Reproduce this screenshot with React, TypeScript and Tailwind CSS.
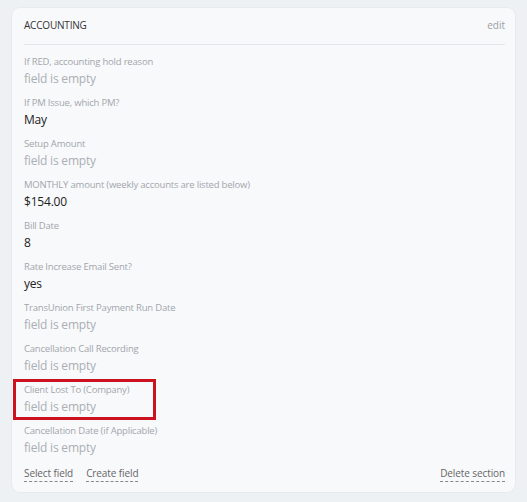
import React from "react";

const fields: { label: string; value: string | null }[] = [
  { label: "If RED, accounting hold reason", value: null },
  { label: "If PM Issue, which PM?", value: "May" },
  { label: "Setup Amount", value: null },
  { label: "MONTHLY amount (weekly accounts are listed below)", value: "$154.00" },
  { label: "Bill Date", value: "8" },
  { label: "Rate Increase Email Sent?", value: "yes" },
  { label: "TransUnion First Payment Run Date", value: null },
  { label: "Cancellation Call Recording", value: null },
  { label: "Client Lost To (Company)", value: null },
  { label: "Cancellation Date (if Applicable)", value: null },
];

export default function App() {
  return (
    <div
      className="w-[527px] h-[502px] bg-[#eef1f4] pt-[8px] pl-[12px]"
      style={{ fontFamily: '"Open Sans", "Noto Sans", sans-serif' }}
    >
      <div className="w-[503px] h-[484px] bg-[#f8f9fb] rounded-[8px] shadow-[0_0_0_1px_#e8ebee] pl-[12px] pr-[10px] flex flex-col">
        <div className="flex justify-between items-center pt-[9px] pb-[11px] border-b border-[#e3e6e9]">
          <span className="text-[10px] leading-[16px] text-[#333] tracking-[-0.2px]">ACCOUNTING</span>
          <span className="text-[10px] leading-[16px] text-[#9a9ea3]">edit</span>
        </div>
        <div className="flex flex-col gap-[7px] pt-[9px]">
          {fields.map((f, i) => {
            const inner = (
              <>
                <div className="text-[9.5px] leading-[16px] tracking-[-0.2px] text-[#a2a6ab]">{f.label}</div>
                <div
                  className={
                    "text-[12px] leading-[18px] tracking-[-0.2px] " +
                    (f.value ? "text-[#222]" : "text-[#abafb4]")
                  }
                >
                  {f.value ?? "field is empty"}
                </div>
              </>
            );
            if (f.label === "Client Lost To (Company)") {
              return (
                <div key={i} className="relative">
                  {inner}
                  <div className="absolute left-[-11px] top-[-3px] w-[143px] h-[41px] border-[3px] border-[#cc1121]" />
                </div>
              );
            }
            return <div key={i}>{inner}</div>;
          })}
        </div>
        <div className="flex justify-between mt-[8px]">
          <div className="flex gap-[13px]">
            <span className="text-[10px] leading-[16px] tracking-[-0.1px] text-[#666] border-b border-dashed border-[#888]">Select field</span>
            <span className="text-[10px] leading-[16px] tracking-[-0.1px] text-[#666] border-b border-dashed border-[#888]">Create field</span>
          </div>
          <span className="text-[10px] leading-[16px] tracking-[-0.1px] text-[#666] border-b border-dashed border-[#888]">Delete section</span>
        </div>
      </div>
    </div>
  );
}
